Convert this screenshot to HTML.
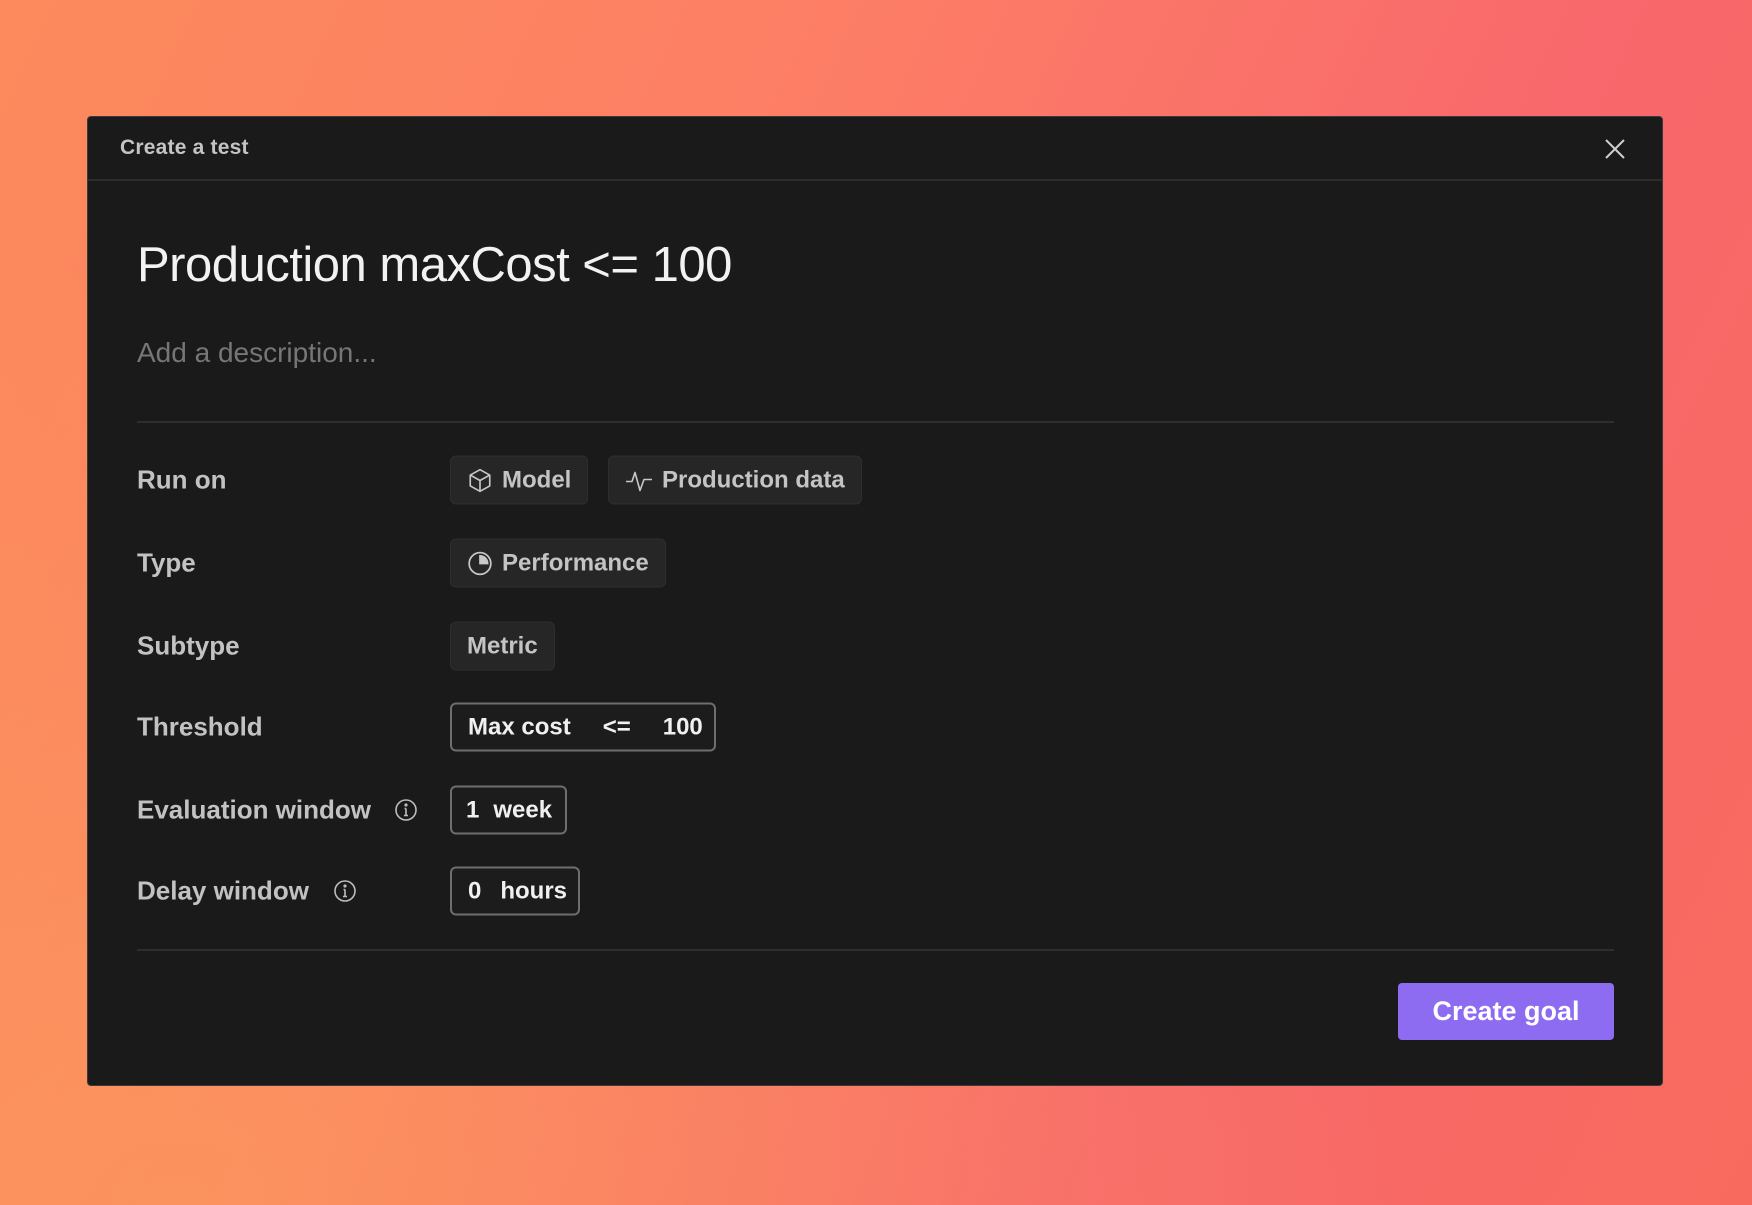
<!DOCTYPE html>
<html><head><style>
*{margin:0;padding:0;box-sizing:border-box}
body{width:1752px;height:1205px;overflow:hidden;font-family:"Liberation Sans",sans-serif;
background:linear-gradient(115deg,#fc8a5c 0%,#fd7f65 35%,#f8686c 70%,#f96a5e 100%);position:relative}
.glow{position:absolute;inset:0;background:radial-gradient(ellipse at 10% 100%,rgba(250,160,90,.6),transparent 55%)}
.modal{position:absolute;left:87px;top:116px;width:1576px;height:970px;background:#1a1a1a;border:1px solid #3a3a3a;border-radius:4px}
.hdr{height:64px;border-bottom:2px solid #2c2c2c;position:relative}
.hdr span{position:absolute;left:32px;top:19px;font-size:21px;font-weight:bold;color:#c4c4c4;letter-spacing:.2px}
.x{position:absolute;right:36px;top:21px}
.title{position:absolute;left:49px;top:120px;font-size:49px;color:#f2f2f2;letter-spacing:-.5px}
.desc{position:absolute;left:49px;top:220px;font-size:28px;color:#767676}
.hr{position:absolute;left:49px;width:1477px;height:2px;background:#2e2e2e}
.lbl{position:absolute;left:49px;font-size:26px;font-weight:bold;color:#c2c2c2;transform:translateY(-50%);white-space:nowrap}
.chip{position:absolute;left:362px;height:49px;transform:translateY(-50%);background:#262626;border:1px solid #2e2e2e;border-radius:6px;color:#c4c4c4;font-size:24px;font-weight:bold;display:flex;align-items:center;padding:0 16px;gap:9px;white-space:nowrap}
.box{background:#1c1c1c;border:2px solid #6e6e6e;color:#f0f0f0;border-radius:6px}
.info{position:absolute;transform:translateY(-50%)}
.btn{position:absolute;left:1310px;top:866px;width:216px;height:57px;background:#8d6cf2;border-radius:4px;color:#fff;font-size:27px;font-weight:bold;display:flex;align-items:center;justify-content:center}
</style></head><body><div class="glow"></div>
<div class="modal">
<div class="hdr"><span>Create a test</span>
<svg class="x" width="22" height="22" viewBox="0 0 22 22"><path d="M2 2L20 20M20 2L2 20" stroke="#cfcfcf" stroke-width="2"/></svg></div>
<div class="title">Production maxCost &lt;= 100</div>
<div class="desc">Add a description...</div>
<div class="hr" style="top:304px"></div>

<div class="lbl" style="top:363px">Run on</div>
<div class="chip" style="top:363px"><svg width="26" height="26" viewBox="0 0 24 24" fill="none" stroke="#c8c8c8" stroke-width="1.5" stroke-linejoin="round"><path d="M12 2l9 5v10l-9 5-9-5V7z"/><path d="M3 7l9 5 9-5M12 12v10"/></svg>Model</div>
<div class="chip" style="top:363px;left:520px"><svg width="28" height="26" viewBox="0 0 28 24" fill="none" stroke="#c8c8c8" stroke-width="1.6" stroke-linejoin="round"><path d="M1 13h6l3-9 5 18 4-11h8"/></svg>Production data</div>

<div class="lbl" style="top:446px">Type</div>
<div class="chip" style="top:446px"><svg width="26" height="26" viewBox="0 0 24 24" fill="none" stroke="#c8c8c8" stroke-width="1.6"><circle cx="12" cy="12" r="10"/><path d="M12 5v7h7a7 7 0 0 0-7-7z" fill="#c8c8c8"/></svg>Performance</div>

<div class="lbl" style="top:529px">Subtype</div>
<div class="chip" style="top:529px">Metric</div>

<div class="lbl" style="top:610px">Threshold</div>
<div class="chip box" style="top:610px;width:266px;gap:0"><span>Max cost</span><span style="margin-left:32px">&lt;=</span><span style="margin-left:32px">100</span></div>

<div class="lbl" style="top:693px">Evaluation window</div>
<svg class="info" style="left:306px;top:693px" width="24" height="24" viewBox="0 0 24 24" fill="none" stroke="#bdbdbd" stroke-width="1.6"><circle cx="12" cy="12" r="10"/><path d="M12 10.5v7M10 17.5h4M10.5 10.5H12"/><circle cx="12" cy="7" r=".8" fill="#bdbdbd"/></svg>
<div class="chip box" style="top:693px;width:117px;gap:0;padding:0 14px"><span>1</span><span style="margin-left:14px">week</span></div>

<div class="lbl" style="top:774px">Delay window</div>
<svg class="info" style="left:245px;top:774px" width="24" height="24" viewBox="0 0 24 24" fill="none" stroke="#bdbdbd" stroke-width="1.6"><circle cx="12" cy="12" r="10"/><path d="M12 10.5v7M10 17.5h4M10.5 10.5H12"/><circle cx="12" cy="7" r=".8" fill="#bdbdbd"/></svg>
<div class="chip box" style="top:774px;width:130px;gap:0;padding:0 16px"><span>0</span><span style="margin-left:19px">hours</span></div>

<div class="hr" style="top:832px"></div>
<div class="btn">Create goal</div>
</div>
</body></html>
